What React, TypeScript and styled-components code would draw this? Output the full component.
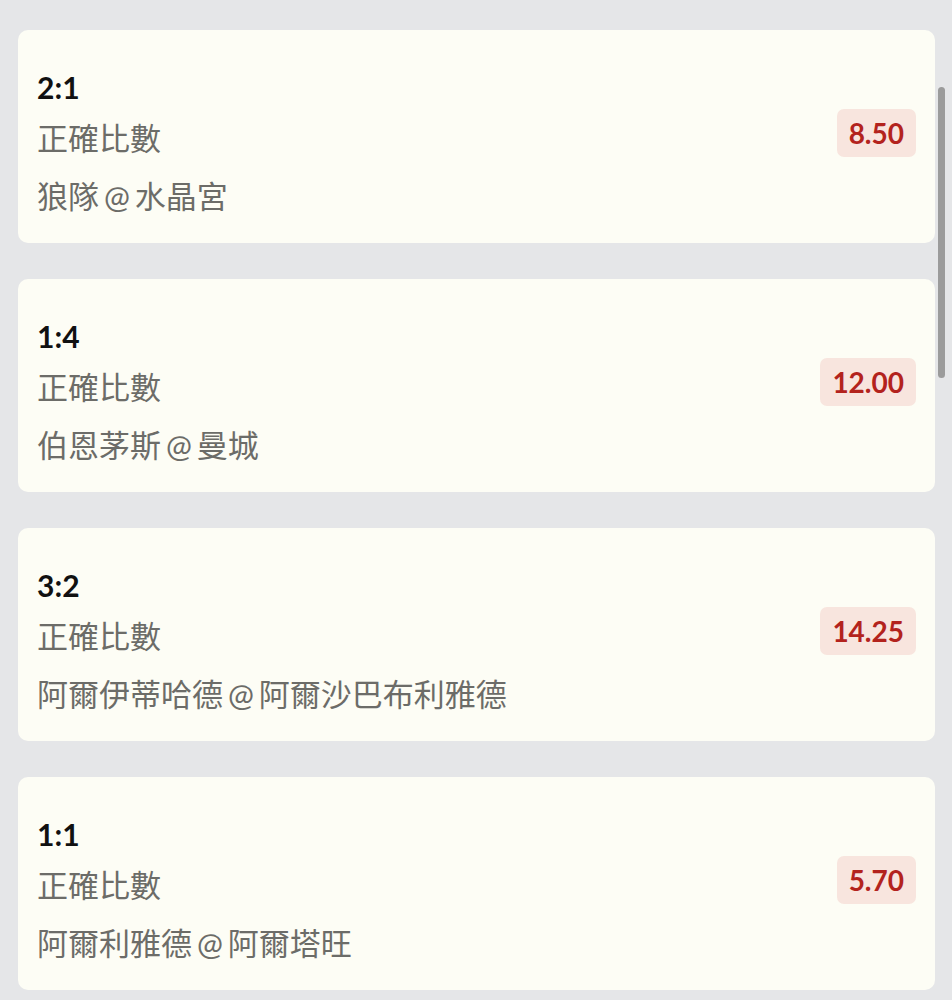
import * as React from "react";
import styled, { createGlobalStyle } from "styled-components";

const GlobalStyle = createGlobalStyle`
  html, body {
    margin: 0;
    padding: 0;
    background: #e5e6e8;
    overflow: hidden;
  }
  body {
    font-family: Lato, "Noto Sans CJK TC", sans-serif;
    -webkit-font-smoothing: antialiased;
  }
`;

const Page = styled.div`
  position: relative;
  height: 1000px;
  overflow: hidden;
  background: #e5e6e8;
`;

const List = styled.div`
  display: flex;
  flex-direction: column;
  gap: 36px;
  padding: 30px 17px 30px 18px;
`;

const Card = styled.div`
  display: flex;
  justify-content: space-between;
  align-items: flex-start;
  height: 213px;
  box-sizing: border-box;
  padding: 39px 19px 18px 19px;
  background: #fdfdf5;
  border-radius: 10px;
`;

const Info = styled.div`
  display: flex;
  flex-direction: column;
`;

const Score = styled.div`
  font-family: Lato, "Noto Sans CJK TC", sans-serif;
  font-weight: 700;
  font-size: 30px;
  line-height: 36px;
  color: #111111;
`;

const Line = styled.div<{ $first?: boolean }>`
  font-family: Lato, "Noto Sans CJK TC", sans-serif;
  font-size: 31px;
  line-height: 58px;
  color: #6c6c68;
  margin-top: ${(p) => (p.$first ? "4px" : "0")};
  white-space: nowrap;
`;

// the "@" between the teams sits a bit tighter than Lato's spacing
const At = styled.span`
  margin: 0 -3px;
`;

const Odds = styled.div`
  margin-top: 40px;
  padding: 6px 12px;
  font-family: Lato, sans-serif;
  font-weight: 700;
  font-size: 28px;
  line-height: 36px;
  color: #b3231d;
  background: #f8e5de;
  border-radius: 7px;
`;

const ScrollThumb = styled.div`
  position: absolute;
  top: 87px;
  right: 7px;
  width: 7px;
  height: 291px;
  border-radius: 4px;
  background: #9b9b9b;
`;

const bets = [
  { home: "狼隊", away: "水晶宮", score: "2:1", odds: "8.50" },
  { home: "伯恩茅斯", away: "曼城", score: "1:4", odds: "12.00" },
  { home: "阿爾伊蒂哈德", away: "阿爾沙巴布利雅德", score: "3:2", odds: "14.25" },
  { home: "阿爾利雅德", away: "阿爾塔旺", score: "1:1", odds: "5.70" },
];

export default function App() {
  return (
    <Page>
      <GlobalStyle />
      <List>
        {bets.map((b) => (
          <Card key={b.home + b.away}>
            <Info>
              <Score>{b.score}</Score>
              <Line $first>正確比數</Line>
              <Line>
                {b.home} <At>@</At> {b.away}
              </Line>
            </Info>
            <Odds>{b.odds}</Odds>
          </Card>
        ))}
      </List>
      <ScrollThumb />
    </Page>
  );
}
